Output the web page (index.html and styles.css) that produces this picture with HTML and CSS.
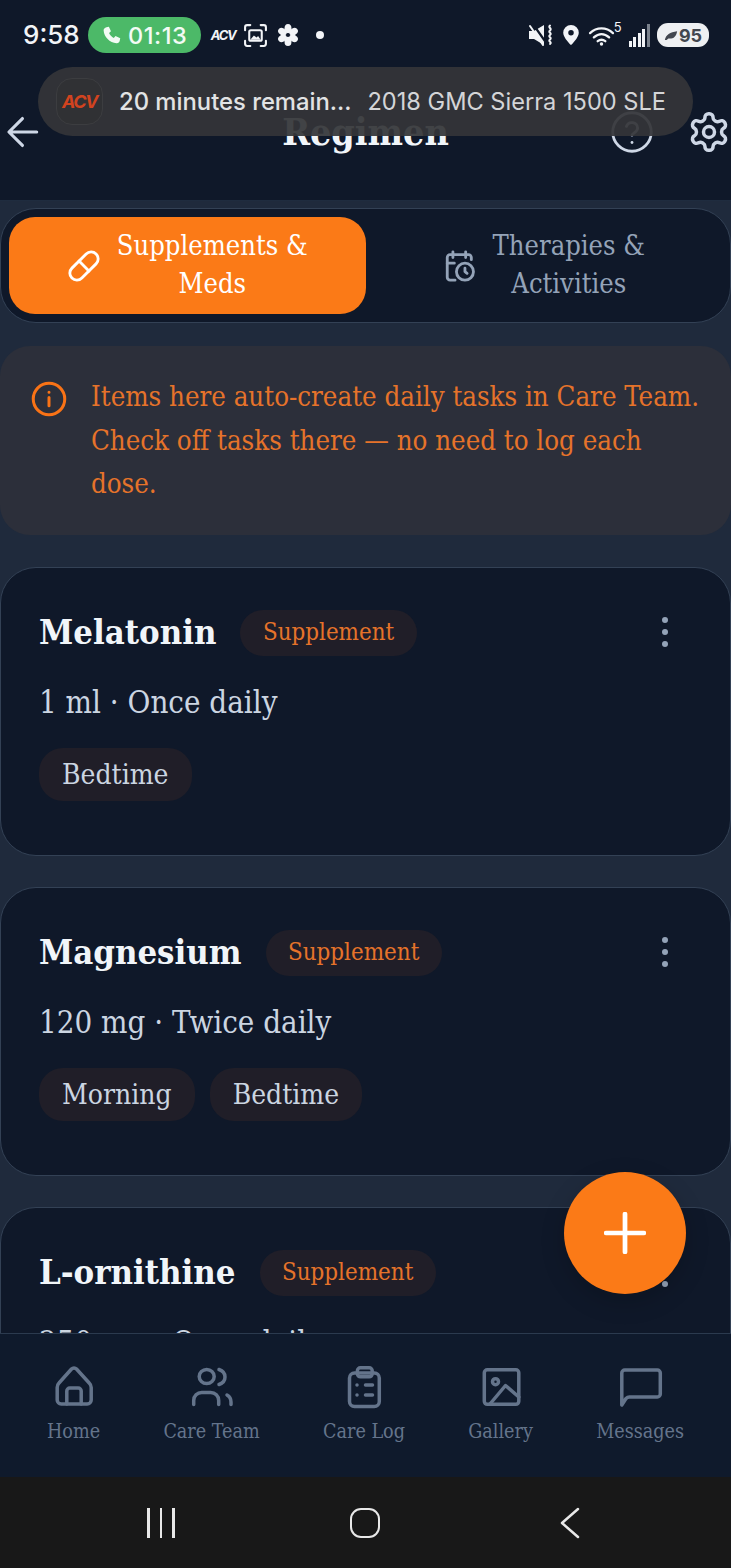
FILE: index.html
```html
<!DOCTYPE html>
<html lang="en">
<head>
<meta charset="utf-8">
<title>Regimen</title>
<link rel="stylesheet" href="styles.css">
</head>
<body>
<div class="phone">
  <div class="top">
    <div class="status">
      <div class="status-left">
        <span class="clock">9:58</span>
        <span class="call">
          <svg class="call-ic" viewBox="0 0 24 24"><path d="M6.200 2.600 9 2l2.400 5.200-2.200 2c1 2.400 2.900 4.400 5.400 5.600l2-2.200L22 15l-.6 3c-.3 1.600-1.800 3-3.600 2.800C9.800 20 3.600 13.600 3 6.200 2.900 4.500 4.400 3 6.200 2.600Z"/></svg>
          01:13
        </span>
        <span class="acv-mini">ACV</span>
        <svg class="st-ic shot" viewBox="0 0 24 24"><path d="M2 7V4a2 2 0 0 1 2-2h3M17 2h3a2 2 0 0 1 2 2v3M2 17v3a2 2 0 0 0 2 2h3M22 17v3a2 2 0 0 1-2 2h-3"/><rect x="6" y="7" width="12" height="10" rx="1.500"/><path class="fill" d="M7 16l3.500-4 2.500 2 1.500-1.500L17 16Z"/></svg>
        <svg class="flower" viewBox="0 0 24 26">
          <ellipse cx="12" cy="6" rx="3.800" ry="5"/>
          <ellipse cx="12" cy="20" rx="3.800" ry="5"/>
          <ellipse cx="12" cy="6" rx="3.800" ry="5" transform="rotate(60 12 13)"/>
          <ellipse cx="12" cy="6" rx="3.800" ry="5" transform="rotate(120 12 13)"/>
          <ellipse cx="12" cy="6" rx="3.800" ry="5" transform="rotate(240 12 13)"/>
          <ellipse cx="12" cy="6" rx="3.800" ry="5" transform="rotate(300 12 13)"/>
        </svg>
        <span class="dot"></span>
      </div>
      <div class="status-right">
        <svg class="st-ic mute" viewBox="0 0 25 22"><path class="fill" d="M0 7h5l10-6v20L5 15H0Z"/><path class="cut-gap" d="M4 0l14 20"/><path class="cut" d="M1 2l13 19"/><path d="M21 1.500c-2.500 2 2.500 3 0 5s2.500 2.500 0 4.500 2.500 2.500 0 4.500 2.500 2.500 0 4.500"/></svg>
        <svg class="pin" viewBox="0 0 24 24"><path fill-rule="evenodd" d="M12 1a8.500 8.500 0 0 0-8.500 8.500C3.500 15 12 23 12 23s8.500-8 8.500-13.500A8.500 8.500 0 0 0 12 1Zm0 5.500a3 3 0 1 1 0 6 3 3 0 0 1 0-6Z"/></svg>
        <span class="wifi">
          <svg class="st-ic wifi-ic" viewBox="0 0 28 22"><path d="M2 8.500C9 2 19 2 26 8.500M6 13c5-4.500 11-4.500 16 0M10 17c2.500-2 5.500-2 8 0"/><circle class="fill" cx="14" cy="20" r="1.800"/></svg>
          <span class="wifi-n">5</span>
        </span>
        <span class="signal"><i class="b1"></i><i class="b2"></i><i class="b3"></i><i class="b4"></i><i class="b5"></i></span>
        <span class="battery">
          <svg class="leaf" viewBox="0 0 16 12"><path d="M1 11C2 5 7 2 15 1c-1 6-4 9-10 8.500L3 11Z"/></svg>
          95
        </span>
      </div>
    </div>
    <header class="header">
      <button class="hd-btn back" aria-label="Back">
        <svg class="hd-ic" viewBox="0 0 24 24"><path d="M20 12H3M11 3.500 2.500 12l8.500 8.500"/></svg>
      </button>
      <h1 class="title">Regimen</h1>
      <div class="hd-actions">
        <svg class="hd-ic help" viewBox="0 0 24 24"><circle cx="12" cy="12" r="11"/><path d="M8.800 8.800a3.300 3.300 0 0 1 6.400 1c0 2.200-3.200 3-3.200 4"/><path d="M12 18h.01"/></svg>
        <svg class="hd-ic gear" viewBox="0 0 24 24"><path d="M12.220 2h-.44a2 2 0 0 0-2 2v.18a2 2 0 0 1-1 1.730l-.43.250a2 2 0 0 1-2 0l-.15-.08a2 2 0 0 0-2.730.730l-.22.380a2 2 0 0 0 .73 2.730l.15.100a2 2 0 0 1 1 1.720v.510a2 2 0 0 1-1 1.740l-.15.090a2 2 0 0 0-.73 2.730l.22.380a2 2 0 0 0 2.730.730l.15-.08a2 2 0 0 1 2 0l.43.250a2 2 0 0 1 1 1.730V20a2 2 0 0 0 2 2h.44a2 2 0 0 0 2-2v-.18a2 2 0 0 1 1-1.730l.43-.25a2 2 0 0 1 2 0l.15.080a2 2 0 0 0 2.730-.730l.22-.390a2 2 0 0 0-.73-2.730l-.15-.08a2 2 0 0 1-1-1.740v-.5a2 2 0 0 1 1-1.740l.15-.09a2 2 0 0 0 .73-2.730l-.22-.38a2 2 0 0 0-2.730-.730l-.15.080a2 2 0 0 1-2 0l-.43-.25a2 2 0 0 1-1-1.730V4a2 2 0 0 0-2-2z"/><circle cx="12" cy="12" r="3"/></svg>
      </div>
    </header>
    <div class="toast">
      <span class="toast-logo"><span class="toast-acv">ACV</span></span>
      <span class="toast-a">20 minutes remain...</span>
      <span class="toast-b">2018 GMC Sierra 1500 SLE</span>
    </div>
  </div>

  <main class="main">
    <div class="tabs">
      <div class="tab active">
        <svg class="tab-ic" viewBox="0 0 24 24"><path d="m10.500 20.500 10-10a4.950 4.950 0 1 0-7-7l-10 10a4.950 4.950 0 1 0 7 7Z"/><path d="m8.500 8.500 7 7"/></svg>
        <span class="tab-label">Supplements &amp;<br>Meds</span>
      </div>
      <div class="tab">
        <svg class="tab-ic" viewBox="0 0 24 24"><path d="M20 7.500V6a2 2 0 0 0-2-2H5a2 2 0 0 0-2 2v14a2 2 0 0 0 2 2h3.500"/><path d="M16 2v4M7 2v4M3 10h5"/><circle cx="15.500" cy="16" r="6"/><path d="M15.500 13.500V16l1.500 1.200"/></svg>
        <span class="tab-label">Therapies &amp;<br>Activities</span>
      </div>
    </div>

    <div class="banner">
      <svg class="banner-ic" viewBox="0 0 24 24"><circle cx="12" cy="12" r="10.500"/><path d="M12 16.500V11M12 7.500h.01"/></svg>
      <p class="banner-text">Items here auto-create daily tasks in Care Team. Check off tasks there — no need to log each dose.</p>
    </div>

    <article class="card">
      <div class="card-head">
        <h2 class="card-name">Melatonin</h2>
        <span class="badge">Supplement</span>
        <span class="kebab"><i></i><i></i><i></i></span>
      </div>
      <p class="dose">1 ml · Once daily</p>
      <div class="tags"><span class="tag">Bedtime</span></div>
    </article>

    <article class="card">
      <div class="card-head">
        <h2 class="card-name">Magnesium</h2>
        <span class="badge">Supplement</span>
        <span class="kebab"><i></i><i></i><i></i></span>
      </div>
      <p class="dose">120 mg · Twice daily</p>
      <div class="tags"><span class="tag">Morning</span><span class="tag">Bedtime</span></div>
    </article>

    <article class="card">
      <div class="card-head">
        <h2 class="card-name">L-ornithine</h2>
        <span class="badge">Supplement</span>
        <span class="kebab"><i></i><i></i><i></i></span>
      </div>
      <p class="dose">250 mg · Once daily</p>
    </article>

    <button class="fab" aria-label="Add">
      <svg class="fab-ic" viewBox="0 0 40 40"><path d="M20 2v36M2 20h36"/></svg>
    </button>
  </main>

  <nav class="nav">
    <div class="nav-item">
      <svg class="nav-ic" viewBox="0 0 48 48"><path d="M9 20 21.500 6a3.500 3.500 0 0 1 5 0L39.200 20c1.300 1.300 2 2.700 2 4.500V37a4 4 0 0 1-4 4H11.200a4 4 0 0 1-4-4V24.500c0-1.800.5-3.200 1.800-4.500Z"/><path d="M16.800 41V28a3 3 0 0 1 3-3h8.400a3 3 0 0 1 3 3v13"/></svg>
      <span class="nav-label">Home</span>
    </div>
    <div class="nav-item">
      <svg class="nav-ic" viewBox="0 0 48 48"><ellipse cx="18.700" cy="13.500" rx="7.500" ry="7"/><path d="M5.700 41.500V37.500a8 8 0 0 1 8-8h9a8 8 0 0 1 8 8v4"/><path d="M31 6.500c3.500 1.200 6 4 6 7.500s-2.500 6.300-6 7.500"/><path d="M39 32c2.500 1.500 4 4 4 7v2.500"/></svg>
      <span class="nav-label">Care Team</span>
    </div>
    <div class="nav-item">
      <svg class="nav-ic" viewBox="0 0 48 48"><rect x="9.500" y="10" width="29.800" height="33.500" rx="5"/><rect x="17.400" y="4.800" width="14.800" height="9" rx="3"/><path d="M17 22h.01M25.500 22h7M17 32h.01M25.500 32h7"/></svg>
      <span class="nav-label">Care Log</span>
    </div>
    <div class="nav-item">
      <svg class="nav-ic" viewBox="0 0 48 48"><rect x="7.300" y="6.800" width="34.500" height="34.500" rx="3"/><circle cx="18.500" cy="18.700" r="3"/><path d="M13 41 28.500 22.500 41.800 34"/></svg>
      <span class="nav-label">Gallery</span>
    </div>
    <div class="nav-item">
      <svg class="nav-ic" viewBox="0 0 48 48"><path d="M5.800 42V10a3 3 0 0 1 3-3h32.500a3 3 0 0 1 3 3v21a3 3 0 0 1-3 3H13.500c-1.500 0-2.500.5-3.500 1.500Z"/></svg>
      <span class="nav-label">Messages</span>
    </div>
  </nav>

  <div class="android">
    <span class="recents"><i></i><i></i><i></i></span>
    <span class="homekey"></span>
    <svg class="backkey" viewBox="0 0 20 32"><path d="M19 2 3 16l16 14"/></svg>
  </div>
</div>
</body>
</html>
```
FILE: styles.css
```css
* { box-sizing: border-box; margin: 0; padding: 0; }
html, body { background: #1e293b; }
body { width: 731px; height: 1568px; overflow: hidden; font-family: "DejaVu Serif Condensed", "DejaVu Serif", "Liberation Serif", serif; }

.phone { width: 731px; height: 1568px; display: flex; flex-direction: column; background: #1f2a3c; overflow: hidden; }

/* top area */
.top { position: relative; height: 201px; background: #0f1829; flex: none; border-bottom: 1px solid #1f2c3f; }
.status { height: 68px; padding: 2px 22px 0 23px; display: flex; align-items: center; justify-content: space-between; font-family: Inter, Roboto, sans-serif; color: #f2f4f7; }
.status-left, .status-right { display: flex; align-items: center; }
.clock { font-size: 26px; font-weight: 500; line-height: 36px; }
.call { margin-left: 8px; width: 113px; height: 36px; border-radius: 18px; background: #4cb968; display: flex; align-items: center; justify-content: center; gap: 6px; font-size: 23.500px; font-weight: 500; letter-spacing: .6px; color: #f3fbf5; }
.call-ic { width: 21px; height: 21px; fill: #f3fbf5; }
.acv-mini { margin-left: 10px; font-size: 13px; font-weight: 700; font-style: italic; letter-spacing: -1.200px; width: 26px; }
.st-ic { fill: none; stroke: #f2f4f7; stroke-width: 2; stroke-linecap: round; stroke-linejoin: round; }
.st-ic .fill { fill: #f2f4f7; stroke: none; }
.st-ic .cut { stroke: #f2f4f7; stroke-width: 2; }
.st-ic .cut-gap { stroke: #0f1829; stroke-width: 2.200; }
.shot { width: 25px; height: 25px; margin-left: 6px; }
.flower { width: 22px; height: 24px; margin-left: 9px; fill: #f2f4f7; }
.dot { width: 8px; height: 8px; border-radius: 50%; background: #f2f4f7; margin-left: 17px; }
.mute { width: 25px; height: 22px; }
.pin { width: 22px; height: 22px; margin-left: 6px; fill: #f2f4f7; }
.wifi { display: flex; margin-left: 6px; width: 33px; }
.wifi-ic { width: 27px; height: 21px; stroke-width: 2.400; flex: none; }
.wifi-n { font-size: 13px; line-height: 11px; margin-left: -1px; margin-top: -3px; }
.signal { margin-left: 8px; display: flex; align-items: flex-end; gap: 1.600px; height: 23px; }
.signal i { width: 3px; background: #f2f4f7; display: block; }
.signal .b1 { height: 6px; } .signal .b2 { height: 10px; } .signal .b3 { height: 14px; } .signal .b4 { height: 18px; }
.signal .b5 { height: 23px; background: #7a818c; }
.battery { margin-left: 7px; width: 52px; height: 24px; border-radius: 11px; background: #eef0f2; color: #42474f; font-size: 18px; font-weight: 700; display: flex; align-items: center; justify-content: center; gap: 1px; }
.leaf { width: 14px; height: 11px; fill: #42474f; }

.header { height: 132px; padding: 0 0 0 5px; display: flex; align-items: flex-start; justify-content: space-between; position: relative; }
.hd-btn { background: none; border: 0; display: block; margin-top: 45px; height: 38px; }
.hd-ic { width: 40px; height: 40px; fill: none; stroke: #ced7e6; stroke-width: 2; stroke-linecap: round; stroke-linejoin: round; display: block; }
.back .hd-ic { width: 38px; height: 38px; }
.title { position: absolute; left: 0; right: 0; top: 40px; text-align: center; font-size: 37.300px; line-height: 48px; font-weight: 700; color: #f1f5f9; }
.hd-actions { display: flex; align-items: center; gap: 34px; margin-top: 42px; }
.help { width: 42px; height: 42px; stroke-width: 1.600; }
.gear { width: 44px; height: 44px; stroke-width: 1.900; }

.toast { position: absolute; left: 38px; top: 67px; width: 655px; height: 69px; border-radius: 35px; background: rgba(52, 53, 56, .93); display: flex; align-items: center; padding-left: 18px; font-family: Inter, Roboto, sans-serif; font-size: 23.600px; color: #e2e3e4; }
.toast-logo { width: 47px; height: 47px; border-radius: 16px; background: #303134; border: 1px solid #3c3d40; display: flex; align-items: center; justify-content: center; flex: none; }
.toast-acv { font-size: 18px; font-weight: 700; font-style: italic; letter-spacing: -1.500px; color: #d1431f; }
.toast-a { margin-left: 16px; font-weight: 500; font-size: 23.800px; }
.toast-b { margin-left: 16px; color: #d4d5d7; }

/* main */
.main { position: relative; flex: 1; min-height: 0; overflow: hidden; padding: 7px 0 0; display: flex; flex-direction: column; gap: 32px; }
.tabs { flex: none; height: 115px; margin-bottom: -9px; border: 1px solid #334155; border-radius: 36px; background: #0f1829; padding: 8px; display: flex; }
.tab { flex: 1; display: flex; align-items: center; justify-content: center; gap: 16px; border-radius: 26px; color: #94a3b8; }
.tab.active { background: #fb7a17; color: #fff; }
.tab-ic { width: 34px; height: 34px; fill: none; stroke: currentColor; stroke-width: 2; stroke-linecap: round; stroke-linejoin: round; flex: none; }
.tab-label { text-align: center; font-size: 27.100px; line-height: 38px; padding-bottom: 1px; }

.banner { flex: none; height: 189px; border-radius: 30px; background: #2c2f3a; padding: 29px 20px 0 31px; display: flex; gap: 24px; }
.banner-ic { width: 36px; height: 36px; fill: none; stroke: #f97316; stroke-width: 2; stroke-linecap: round; margin-top: 6px; flex: none; }
.banner-text { font-size: 27.400px; line-height: 43.500px; color: #e6732a; }

.card { position: relative; flex: none; height: 289px; border: 1px solid #334155; border-radius: 36px; background: #0f1829; padding: 42px 38px 0; margin-bottom: -1px; }
.card-head { display: flex; align-items: center; gap: 24px; height: 46px; }
.card-name { font-size: 34.400px; font-weight: 700; color: #f1f5f9; line-height: 46px; padding-bottom: 3px; }
.badge { height: 46px; padding: 0 22.500px 2px; border-radius: 23px; background: #201e28; color: #e6732a; font-size: 23.900px; display: flex; align-items: center; }
.kebab { position: absolute; right: 62px; top: 49px; display: flex; flex-direction: column; gap: 6px; }
.kebab i { display: block; width: 6px; height: 6px; border-radius: 50%; background: #94a3b8; }
.dose { margin-top: 23px; font-size: 31px; line-height: 46px; color: #cbd5e1; }
.tags { display: flex; gap: 15px; margin-top: 23px; }
.tag { height: 53px; padding: 0 23px; border-radius: 24px; background: #201e28; color: #cbd5e1; font-size: 28px; display: flex; align-items: center; }

.fab { position: absolute; left: 564px; top: 971px; width: 122px; height: 122px; border-radius: 50%; background: #fb7a17; border: 0; display: flex; align-items: center; justify-content: center; box-shadow: 0 8px 24px rgba(0, 0, 0, .18); }
.fab-ic { width: 42px; height: 42px; fill: none; stroke: #fff; stroke-width: 4.500; stroke-linecap: round; }

/* nav */
.nav { flex: none; height: 144px; background: #0f1a2c; border-top: 1px solid #2b3a4e; padding: 29px 47px 0; display: flex; justify-content: space-between; }
.nav-item { display: flex; flex-direction: column; align-items: center; gap: 8px; color: #64748b; }
.nav-ic { width: 48px; height: 48px; fill: none; stroke: #64748b; stroke-width: 3.500; stroke-linecap: round; stroke-linejoin: round; }
.nav-label { font-size: 19.600px; line-height: 26px; }

/* android nav */
.android { flex: none; height: 91px; background: #181818; display: flex; align-items: center; position: relative; }
.recents { margin-left: 147px; display: flex; gap: 10px; }
.recents i { display: block; width: 2.500px; height: 30px; background: #e8e8e8; }
.homekey { margin-left: 175px; width: 30px; height: 30px; border: 2.500px solid #e8e8e8; border-radius: 11px; }
.backkey { margin-left: 178px; width: 22px; height: 32px; fill: none; stroke: #e8e8e8; stroke-width: 2.500; stroke-linecap: round; stroke-linejoin: round; }
```
